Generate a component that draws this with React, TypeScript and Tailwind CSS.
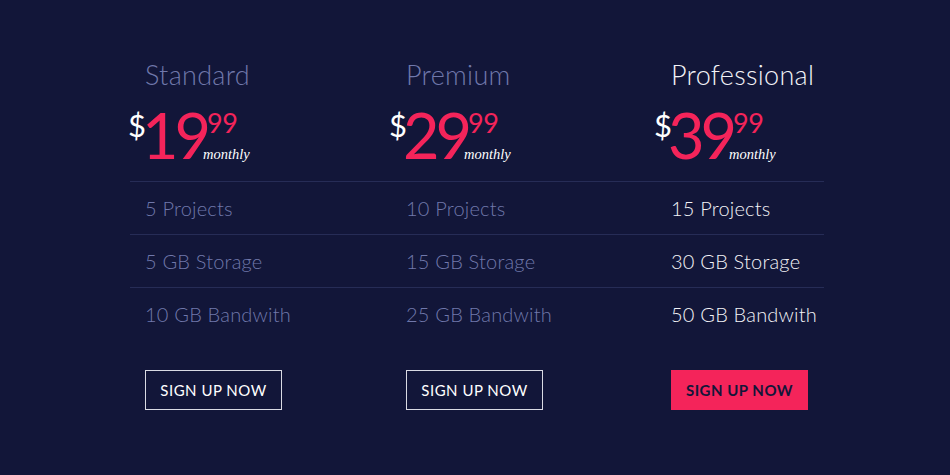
import React from "react";

type Plan = {
  title: string;
  price: string;
  features: string[];
  featured?: boolean;
};

const plans: Plan[] = [
  { title: "Standard", price: "19", features: ["5 Projects", "5 GB Storage", "10 GB Bandwith"] },
  { title: "Premium", price: "29", features: ["10 Projects", "15 GB Storage", "25 GB Bandwith"] },
  { title: "Professional", price: "39", features: ["15 Projects", "30 GB Storage", "50 GB Bandwith"], featured: true },
];

const colW = ["w-[261px]", "w-[265px]", "w-[168px]"];

function Header({ plan }: { plan: Plan }) {
  return (
    <div className="flex flex-col">
      <div
        className={`pl-[15px] text-[27px] leading-[32px] tracking-[0.3px] font-light ${
          plan.featured ? "text-[#f3f3f7]" : "text-[#7078ab]"
        }`}
      >
        {plan.title}
      </div>
      <div className="flex items-start ml-[-2px] mt-[20px] h-[56px]">
        <span className="text-[31px] leading-none text-white mt-[-1px]">$</span>
        <span className="text-[63px] leading-[48px] text-[#f4245a] tracking-[-4px] ml-[-4px]">
          {plan.price}
        </span>
        <div className="flex flex-col ml-[-1px] mt-[2px]">
          <span className="text-[27px] leading-[20px] text-[#f4245a] tracking-[-0.5px] pl-[1px]">99</span>
          <span
            className="text-[14.5px] italic text-white mt-[14px] leading-none ml-[-3px]"
            style={{ fontFamily: '"Liberation Serif", serif' }}
          >
            monthly
          </span>
        </div>
      </div>
    </div>
  );
}

export default function App() {
  return (
    <div
      className="w-[950px] h-[475px] bg-[#121639] overflow-hidden"
      style={{ fontFamily: "Lato, 'Open Sans', sans-serif" }}
    >
      <div className="ml-[130px] w-[694px] pt-[59px]">
        <div className="flex h-[122px]">
          {plans.map((p, i) => (
            <div key={p.title} className={colW[i]}>
              <Header plan={p} />
            </div>
          ))}
        </div>
        {[0, 1, 2].map((r) => (
          <div key={r} className="flex h-[53px] border-t border-[#262c56]">
            {plans.map((p, i) => (
              <div
                key={p.title}
                className={`${colW[i]} pl-[15px] flex items-center text-[20px] font-light tracking-[0.2px] ${
                  p.featured ? "text-[#f3f3f7]" : "text-[#7078ab]"
                }`}
              >
                {p.features[r]}
              </div>
            ))}
          </div>
        ))}
        <div className="flex mt-[30px]">
          {plans.map((p, i) => (
            <div key={p.title} className={`${colW[i]} pl-[15px]`}>
              <div
                className={`w-[137px] h-[40px] flex items-center justify-center text-[15px] tracking-[0.5px] ${
                  p.featured
                    ? "bg-[#f4245a] text-[#121639] font-bold"
                    : "border-[1.5px] border-[#d9dae3] text-white"
                }`}
              >
                SIGN UP NOW
              </div>
            </div>
          ))}
        </div>
      </div>
    </div>
  );
}
